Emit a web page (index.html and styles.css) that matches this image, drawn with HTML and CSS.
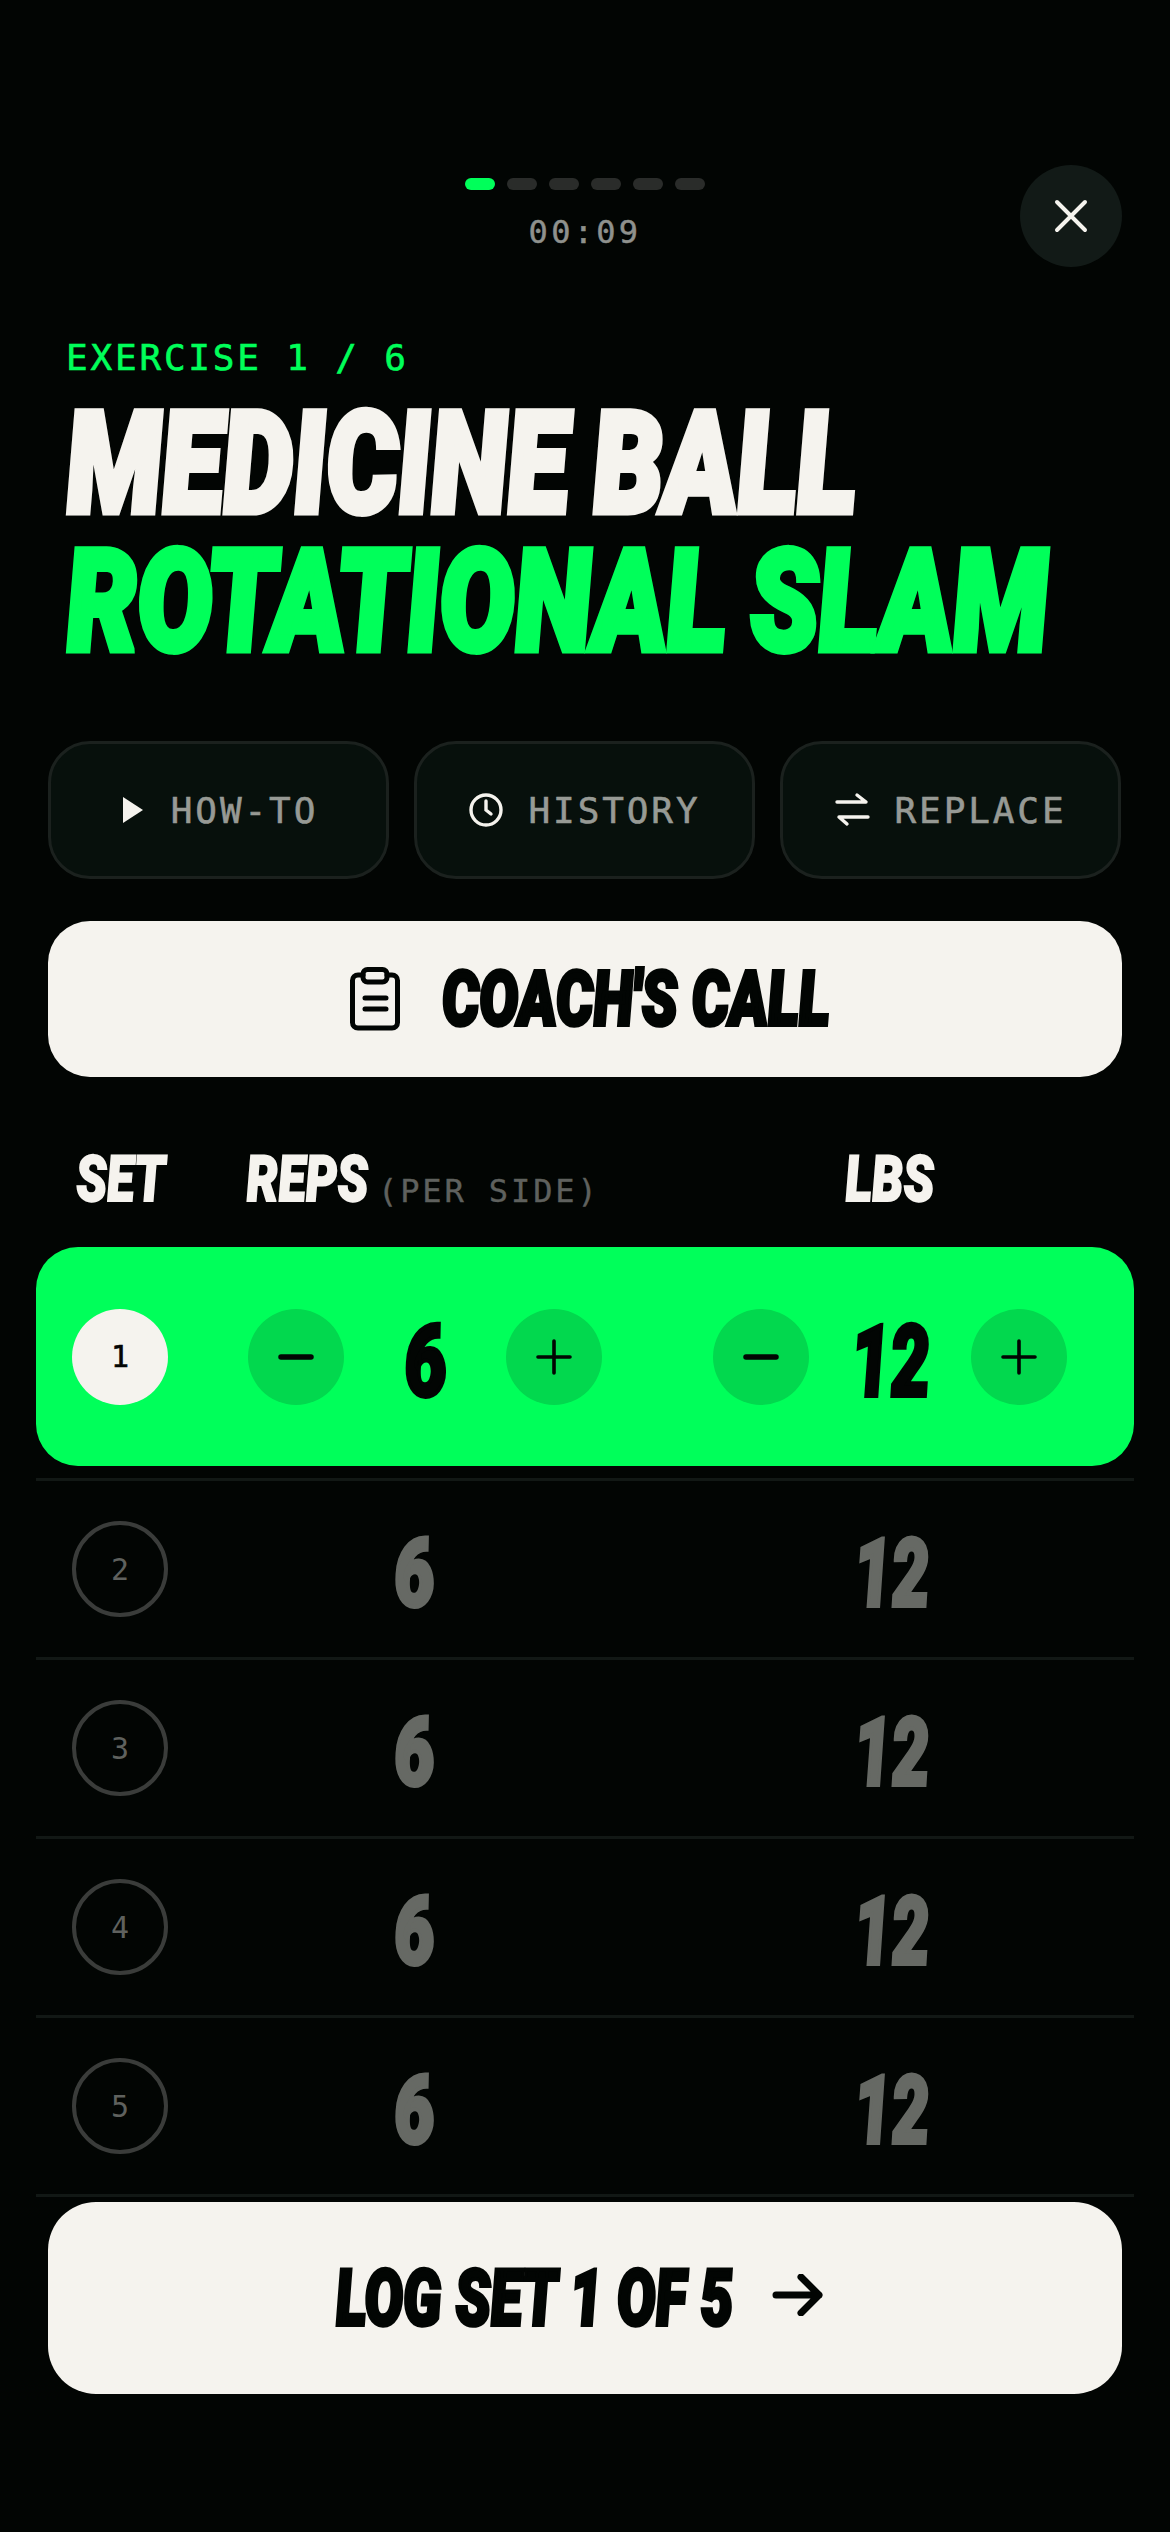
FILE: index.html
```html
<!DOCTYPE html>
<html lang="en">
<head>
<meta charset="utf-8">
<title>Workout</title>
<link rel="stylesheet" href="styles.css">
</head>
<body>
<main class="screen">
  <header class="top">
    <div class="progress">
      <div class="dots"><i class="dot on"></i><i class="dot"></i><i class="dot"></i><i class="dot"></i><i class="dot"></i><i class="dot"></i></div>
      <div class="timer">00:09</div>
    </div>
    <button class="close" aria-label="Close">
      <svg width="36" height="36" viewBox="0 0 36 36"><path d="M4 4 32 32M32 4 4 32" fill="none" stroke="#f5f3ee" stroke-width="4" stroke-linecap="round"/></svg>
    </button>
  </header>
  <section class="head">
    <div class="eyebrow">EXERCISE 1 / 6</div>
    <h1 class="title"><span class="line white">MEDICINE BALL</span><span class="line green">ROTATIONAL SLAM</span></h1>
  </section>
  <nav class="tools">
    <button class="tool"><svg width="28" height="28" viewBox="0 0 28 28"><path d="M4 1 24 14 4 27Z" fill="#f5f3ee"/></svg><span>HOW-TO</span></button>
    <button class="tool"><svg width="36" height="36" viewBox="0 0 36 36"><circle cx="18" cy="18" r="15" fill="none" stroke="#f5f3ee" stroke-width="3.4"/><path d="M18 9V18L23 22" fill="none" stroke="#f5f3ee" stroke-width="3.4" stroke-linecap="round"/></svg><span>HISTORY</span></button>
    <button class="tool"><svg width="36" height="36" viewBox="0 0 36 36"><path d="M3 10H32L23 3M34 25H5L13 32" fill="none" stroke="#f5f3ee" stroke-width="3.4" stroke-linecap="round" stroke-linejoin="round"/></svg><span>REPLACE</span></button>
  </nav>
  <button class="coach">
    <svg width="52" height="64" viewBox="0 0 52 64"><g fill="none" stroke="#020503" stroke-width="5" stroke-linecap="round"><path d="M14 8H9a5.500 5.500 0 0 0-5.500 5.500V55.500a5.500 5.500 0 0 0 5.500 5.500H43a5.500 5.500 0 0 0 5.500-5.500V13.500a5.500 5.500 0 0 0-5.500-5.500H38"/><rect x="14" y="2.500" width="24" height="12.500" rx="4.500"/><path d="M16 31H37M16 42H37"/></g></svg>
    <span class="disp coach-label">COACH'S CALL</span>
  </button>
  <div class="cols">
    <span class="disp col-h set-h">SET</span>
    <span class="reps-h"><span class="disp col-h">REPS</span><span class="per">(PER SIDE)</span></span>
    <span class="disp col-h lbs-h">LBS</span>
  </div>
  <div class="row active">
    <span class="num">1</span>
    <div class="stepper">
      <button class="step"><svg width="36" height="36" viewBox="0 0 36 36"><path d="M3 18H33" stroke="#020503" stroke-width="5.500" stroke-linecap="round"/></svg></button>
      <span class="disp val">6</span>
      <button class="step"><svg width="36" height="36" viewBox="0 0 36 36"><path d="M2 18H34M18 2V34" stroke="#020503" stroke-width="3.600" stroke-linecap="round"/></svg></button>
    </div>
    <div class="stepper">
      <button class="step"><svg width="36" height="36" viewBox="0 0 36 36"><path d="M3 18H33" stroke="#020503" stroke-width="5.500" stroke-linecap="round"/></svg></button>
      <span class="disp val wt">12</span>
      <button class="step"><svg width="36" height="36" viewBox="0 0 36 36"><path d="M2 18H34M18 2V34" stroke="#020503" stroke-width="3.600" stroke-linecap="round"/></svg></button>
    </div>
  </div>
  <div class="rows">
    <div class="row idle"><span class="num">2</span><span class="disp val">6</span><span class="disp val wt">12</span></div>
    <div class="row idle"><span class="num">3</span><span class="disp val">6</span><span class="disp val wt">12</span></div>
    <div class="row idle"><span class="num">4</span><span class="disp val">6</span><span class="disp val wt">12</span></div>
    <div class="row idle"><span class="num">5</span><span class="disp val">6</span><span class="disp val wt">12</span></div>
  </div>
  <button class="log">
    <span class="disp log-label">LOG SET 1 OF 5</span>
    <svg class="arrow" width="52" height="42" viewBox="0 0 52 42"><path d="M4 21H47M29 3 47 21 29 39" fill="none" stroke="#020503" stroke-width="7" stroke-linecap="round" stroke-linejoin="round"/></svg>
  </button>
</main>
</body>
</html>
```
FILE: styles.css
```css
* { box-sizing: border-box; margin: 0; padding: 0; }
html, body { background: #020503; }
body { width: 1170px; height: 2532px; overflow: hidden; font-family: "DejaVu Sans Mono", monospace; }
button { border: 0; background: none; font: inherit; color: inherit; display: flex; align-items: center; justify-content: center; }
.screen { padding: 165px 36px 0; display: flex; flex-direction: column; }
.top { position: relative; height: 102px; }
.progress { display: flex; flex-direction: column; align-items: center; gap: 22px; padding-top: 13px; }
.dots { display: flex; gap: 12px; }
.dot { width: 30px; height: 12px; border-radius: 6px; background: #2a2c2a; }
.dot.on { background: #00ff5a; }
.timer { font-size: 32px; line-height: 40px; letter-spacing: 3.300px; color: #8f918d; -webkit-text-stroke: .5px currentColor; }
.close { position: absolute; right: 12px; top: 0; width: 102px; height: 102px; border-radius: 50%; background: #121a17; }
.head { padding: 70px 30px 0; }
.eyebrow { font-size: 36px; line-height: 42px; letter-spacing: 2.800px; color: #00ff5a; -webkit-text-stroke: .6px currentColor; }
.disp { font-family: "Roboto", sans-serif; font-weight: 900; font-style: italic; display: inline-block; white-space: nowrap; }
.title { margin-top: 16px; font: inherit; }
.line { display: block; font-family: "Roboto", sans-serif; font-weight: 900; font-style: italic; font-size: 141px; line-height: 138px; word-spacing: -4px; white-space: nowrap; transform: scaleX(.797) skewX(4deg); transform-origin: left center; -webkit-text-stroke: 7px currentColor; }
.white { color: #f5f3ee; }
.green { color: #00ff5a; }
.tools { display: grid; grid-template-columns: repeat(3, 341px); gap: 25px; padding: 0 12px; margin-top: 70px; }
.tool { height: 138px; gap: 24px; border-radius: 42px; background: #07100c; border: 3px solid #1b211e; font-size: 36px; letter-spacing: 2.900px; color: #979a95; -webkit-text-stroke: .6px currentColor; }
.coach { margin: 42px 12px 0; height: 156px; padding-left: 8px; border-radius: 42px; background: #f5f3ee; gap: 40px; color: #020503; }
.coach-label { font-size: 76px; transform: scaleX(.77) skewX(4deg); margin: 0 -57px; -webkit-text-stroke: 4px currentColor; }
.cols { position: relative; height: 48px; margin-top: 79px; color: #f5f3ee; }
.col-h { font-size: 64px; line-height: 48px; transform: scaleX(.79) skewX(4deg); transform-origin: left center; -webkit-text-stroke: 2px currentColor; }
.set-h { position: absolute; left: 40px; }
.reps-h { position: absolute; left: 210px; display: flex; align-items: flex-end; }
.reps-h .col-h { width: 132px; }
.per { position: relative; top: 5px; font-size: 32px; line-height: 36px; letter-spacing: 2.900px; color: #5f615e; -webkit-text-stroke: .4px currentColor; }
.lbs-h { position: absolute; left: 809px; }
.row { display: grid; grid-template-columns: 176px 465px 1fr; align-items: center; }
.active { height: 219px; margin-top: 43px; border-radius: 42px; background: #00ff5a; padding-left: 36px; color: #020503; }
.num { width: 96px; height: 96px; border-radius: 50%; display: flex; align-items: center; justify-content: center; font-size: 30px; }
.active .num { background: #f5f3ee; -webkit-text-stroke: .6px currentColor; }
.stepper { display: flex; align-items: center; justify-content: space-between; width: 354px; }
.step { width: 96px; height: 96px; border-radius: 50%; background: #02d84e; }
.val { font-size: 100px; line-height: 96px; padding-top: 10px; transform: scaleX(.76) skewX(4deg); -webkit-text-stroke: 4px currentColor; }
.val.wt { transform: scaleX(.7) skewX(4deg); }
.rows { margin-top: 12px; }
.idle { height: 179px; border-top: 3px solid #121815; padding-left: 36px; grid-template-columns: 176px 332px 133px 356px; justify-items: start; color: #666964; }
.idle .val { font-size: 95px; justify-self: center; }
.idle .val.wt { grid-column: 4; }
.idle:last-child { border-bottom: 3px solid #121815; height: 182px; }
.idle .num { border: 4px solid #3a3c3a; color: #5f615e; }
.log { margin: 5px 12px 0; height: 192px; border-radius: 48px; background: #f5f3ee; gap: 40px; color: #020503; }
.log-label { font-size: 78px; transform: scaleX(.74) skewX(4deg); margin: 0 -70px; -webkit-text-stroke: 4px currentColor; }
.arrow { margin: 0 10px 6px 0; }
```
